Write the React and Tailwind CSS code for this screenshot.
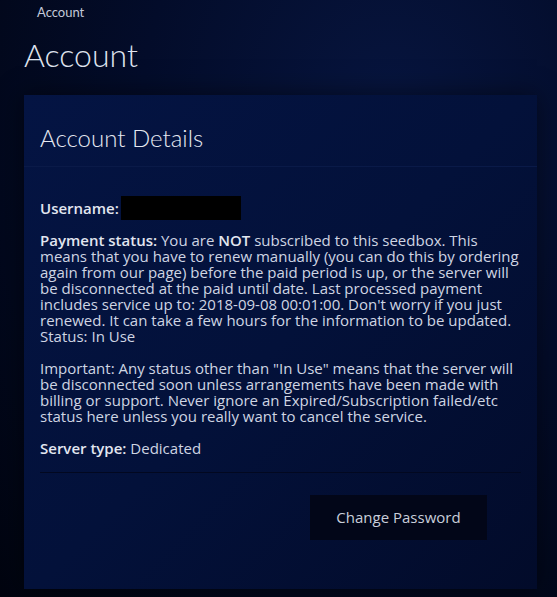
import React from 'react';

const B = ({ children }) => <span className="font-semibold text-[#e2e6f0]">{children}</span>;

export default function App() {
  return (
    <div
      className="min-h-[597px] w-full bg-[radial-gradient(ellipse_at_70%_20%,#07153f_0%,#030c2a_45%,#01040f_100%)] text-[#cfd5e3]"
      style={{ fontFamily: '"Open Sans", Lato, sans-serif' }}
    >
      <div className="px-[37px] pt-[4px] text-[13px] leading-[16px] text-[#c3c9d8]" style={{ fontFamily: 'Lato, sans-serif' }}>Account</div>
      <h1 className="px-[24px] pt-[16px] text-[32px] font-light leading-[38px] text-[#dfe3ee]" style={{ fontFamily: 'Lato, sans-serif' }}>Account</h1>

      <div className="mx-[24px] mt-[21px] w-[513px] bg-[linear-gradient(135deg,#041443_0%,#03113a_50%,#020b2a_100%)] shadow-[0_0_24px_rgba(0,0,0,0.5)]">
        <div className="border-b border-[#0a1a48] px-[16px] pt-[29px] pb-[14px]">
          <h2 className="text-[24px] font-light leading-[28px] text-[#e6e9f2]" style={{ fontFamily: 'Lato, sans-serif' }}>Account Details</h2>
        </div>

        <div className="whitespace-nowrap px-[16px] pt-[29px] pb-[16px] text-[15px] leading-[16px]">
          <p className="flex items-center">
            <B>Username:</B>
            <span className="ml-[2px] inline-block h-[24px] w-[120px] bg-black"></span>
          </p>
          <p className="mt-[12px]">
            <B>Payment status:</B> You are <B>NOT</B> subscribed to this seedbox. This<br />
            means that you have to renew manually (you can do this by ordering<br />
            again from our page) before the paid period is up, or the server will<br />
            be disconnected at the paid until date. Last processed payment<br />
            includes service up to: 2018-09-08 00:01:00. Don't worry if you just<br />
            renewed. It can take a few hours for the information to be updated.<br />
            Status: In Use
          </p>
          <p className="mt-[16px]">
            Important: Any status other than "In Use" means that the server will<br />
            be disconnected soon unless arrangements have been made with<br />
            billing or support. Never ignore an Expired/Subscription failed/etc<br />
            status here unless you really want to cancel the service.
          </p>
          <p className="mt-[16px]">
            <B>Server type:</B> Dedicated
          </p>
        </div>

        <div className="mx-[16px] flex justify-end border-t border-[#020820] pt-[22px] pb-[49px] pr-[34px]">
          <button className="h-[45px] w-[177px] bg-[#020618] text-[15px] text-[#c9cedb]">Change Password</button>
        </div>
      </div>
    </div>
  );
}
